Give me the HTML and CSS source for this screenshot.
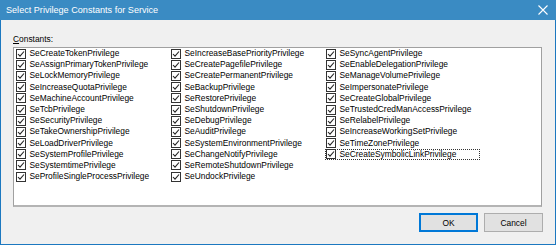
FILE: index.html
```html
<!DOCTYPE html>
<html>
<head>
<meta charset="utf-8">
<link rel="stylesheet" href="styles.css">
</head>
<body>
<div class="window">
  <div class="titlebar">
    <span class="title">Select Privilege Constants for Service</span>
    <svg class="close" width="10" height="10" viewBox="0 0 10 10"><path d="M0.5 0.5 L9.5 9.5 M9.5 0.5 L0.5 9.5" stroke="#fff" stroke-width="1.1" fill="none"/></svg>
  </div>
  <div class="content">
    <div class="label"><u>C</u>onstants:</div>
    <div class="list">
      <div class="item"><span class="cb"></span>SeCreateTokenPrivilege</div>
      <div class="item"><span class="cb"></span>SeAssignPrimaryTokenPrivilege</div>
      <div class="item"><span class="cb"></span>SeLockMemoryPrivilege</div>
      <div class="item"><span class="cb"></span>SeIncreaseQuotaPrivilege</div>
      <div class="item"><span class="cb"></span>SeMachineAccountPrivilege</div>
      <div class="item"><span class="cb"></span>SeTcbPrivilege</div>
      <div class="item"><span class="cb"></span>SeSecurityPrivilege</div>
      <div class="item"><span class="cb"></span>SeTakeOwnershipPrivilege</div>
      <div class="item"><span class="cb"></span>SeLoadDriverPrivilege</div>
      <div class="item"><span class="cb"></span>SeSystemProfilePrivilege</div>
      <div class="item"><span class="cb"></span>SeSystemtimePrivilege</div>
      <div class="item"><span class="cb"></span>SeProfileSingleProcessPrivilege</div>
      <div class="item"><span class="cb"></span>SeIncreaseBasePriorityPrivilege</div>
      <div class="item"><span class="cb"></span>SeCreatePagefilePrivilege</div>
      <div class="item"><span class="cb"></span>SeCreatePermanentPrivilege</div>
      <div class="item"><span class="cb"></span>SeBackupPrivilege</div>
      <div class="item"><span class="cb"></span>SeRestorePrivilege</div>
      <div class="item"><span class="cb"></span>SeShutdownPrivilege</div>
      <div class="item"><span class="cb"></span>SeDebugPrivilege</div>
      <div class="item"><span class="cb"></span>SeAuditPrivilege</div>
      <div class="item"><span class="cb"></span>SeSystemEnvironmentPrivilege</div>
      <div class="item"><span class="cb"></span>SeChangeNotifyPrivilege</div>
      <div class="item"><span class="cb"></span>SeRemoteShutdownPrivilege</div>
      <div class="item"><span class="cb"></span>SeUndockPrivilege</div>
      <div class="item"><span class="cb"></span>SeSyncAgentPrivilege</div>
      <div class="item"><span class="cb"></span>SeEnableDelegationPrivilege</div>
      <div class="item"><span class="cb"></span>SeManageVolumePrivilege</div>
      <div class="item"><span class="cb"></span>SeImpersonatePrivilege</div>
      <div class="item"><span class="cb"></span>SeCreateGlobalPrivilege</div>
      <div class="item"><span class="cb"></span>SeTrustedCredManAccessPrivilege</div>
      <div class="item"><span class="cb"></span>SeRelabelPrivilege</div>
      <div class="item"><span class="cb"></span>SeIncreaseWorkingSetPrivilege</div>
      <div class="item"><span class="cb"></span>SeTimeZonePrivilege</div>
      <div class="item focus"><span class="cb"></span>SeCreateSymbolicLinkPrivilege</div>
    </div>
    <div class="buttons">
      <div class="btn default">OK</div>
      <div class="btn">Cancel</div>
    </div>
  </div>
</div>
</body>
</html>
```

FILE: styles.css
```css
html, body {
  margin: 0;
  padding: 0;
  background: #f0f0f0;
}
body {
  font-family: "Liberation Sans", Arial, sans-serif;
  color: #000;
}
.window {
  width: 556px;
  height: 245px;
  box-sizing: border-box;
  border: 1px solid #1c78c0;
  border-top: none;
  background: #f0f0f0;
  display: flex;
  flex-direction: column;
}
.titlebar {
  height: 20px;
  margin: 0 -1px;
  background: #3a8bc3;
  display: flex;
  align-items: center;
  justify-content: space-between;
  padding: 0 8px 0 6px;
  color: #fff;
}
.title {
  font-size: 9.1px;
  line-height: 20px;
}
.close {
  display: block;
}
.content {
  flex: 1;
  padding: 14px 12px 0 12px;
  display: flex;
  flex-direction: column;
}
.label {
  font-size: 8.4px;
  height: 11px;
  line-height: 11px;
  margin-bottom: 2px;
}
.list {
  width: 529px;
  height: 160px;
  box-sizing: border-box;
  background: #fff;
  border: 1px solid #a0a0a0;
  border-bottom: 2px solid #b4b4b4;
  padding: 0 0 0 1px;
  display: grid;
  grid-template-columns: repeat(3, 155px);
  grid-template-rows: repeat(12, 11.2px);
  grid-auto-flow: column;
  align-content: start;
  font-size: 8.4px;
}
.item {
  display: flex;
  align-items: center;
  padding-left: 1px;
  white-space: nowrap;
  line-height: 11.2px;
  box-sizing: border-box;
}
.cb {
  width: 10px;
  height: 10px;
  box-sizing: border-box;
  border: 1px solid #333;
  background: #fff url("data:image/svg+xml;utf8,<svg xmlns='http://www.w3.org/2000/svg' width='8' height='8' viewBox='0 0 8 8'><path d='M1 4 L3 6.2 L7 1.5' stroke='%23222' stroke-width='1.1' fill='none'/></svg>") no-repeat center;
  margin-right: 3.5px;
  flex: none;
}
.focus {
  outline: 1px dotted #333;
  outline-offset: -1px;
}
.buttons {
  display: flex;
  justify-content: flex-end;
  gap: 6px;
  margin-top: 6px;
}
.btn {
  width: 59px;
  height: 19px;
  box-sizing: border-box;
  border: 1px solid #adadad;
  background: #e1e1e1;
  font-size: 8.4px;
  display: flex;
  align-items: center;
  justify-content: center;
}
.btn.default {
  border-color: #0078d7;
  box-shadow: inset 0 0 0 1px #0078d7;
}
```
